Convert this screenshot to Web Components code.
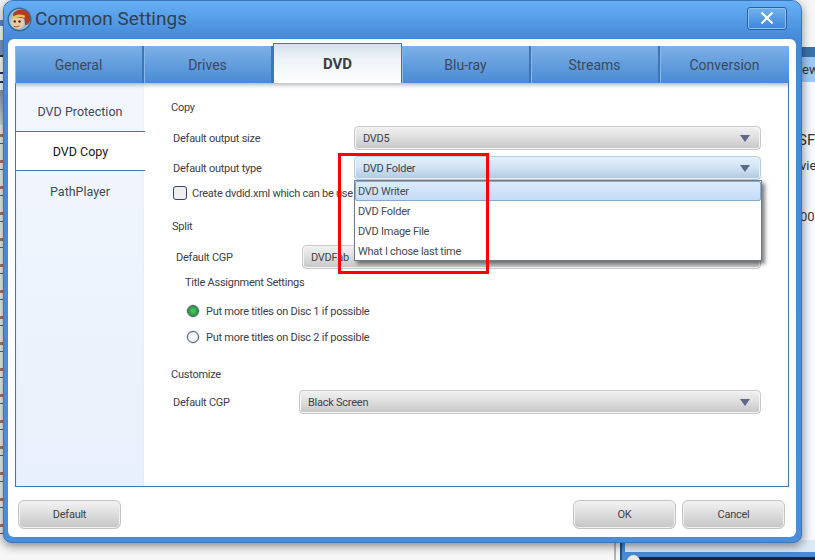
<!DOCTYPE html>
<html><head><meta charset="utf-8"><style>
html,body{margin:0;padding:0;width:815px;height:560px;overflow:hidden;background:#f6f6f6}
body{font:11px Roboto,"Liberation Sans",Arial,sans-serif;color:#3c4048;letter-spacing:-.25px}
</style></head><body>
<template id="t-select"><style>
:host{display:flex;flex:1;height:24px;box-sizing:border-box;align-items:center;justify-content:space-between;padding:0 10px 0 8px;border:1px solid #c9c9c9;border-radius:4px;background:linear-gradient(#f1f1f1,#e2e2e2 40%,#c6c6c6);box-shadow:inset 0 0 0 1px #f4f4f4;color:#3f434b;font-size:11px}
:host([active]){border-color:#b3cde2;background:linear-gradient(#e4f0fb,#d3e4f5 45%,#afc9e2);box-shadow:inset 0 0 0 1px #e6f1fb}
i{width:0;height:0;border-left:5px solid transparent;border-right:5px solid transparent;border-top:7px solid #5c6a84}
</style><span><slot></slot></span><i></i></template>
<template id="t-button"><style>
:host{display:flex;width:103px;height:29px;box-sizing:border-box;align-items:center;justify-content:center;border:1px solid #c4c4c4;border-radius:6px;background:linear-gradient(#f3f3f3,#dedede 45%,#c5c5c5);box-shadow:inset 0 0 0 1px #f0f0f0;color:#3f434b;font-size:11px}
</style><slot></slot></template>
<template id="t-tab"><style>
:host{display:flex;flex:0 0 129px;height:37px;box-sizing:border-box;align-items:center;justify-content:center;font-size:14px;letter-spacing:0;color:#3d4a5c;background:linear-gradient(#7db0e6,#4a8ad5);border-right:2px solid #3c76b6;box-shadow:inset 1px 0 0 #8ab8e8;position:relative}
:host(:last-child){border-right:0}
:host([selected]){background:linear-gradient(#d6e0ea,#eef3f8 40%,#fff);color:#3a3d45;font-weight:700;font-size:15px;height:40px;margin-top:-3px;border:1px solid #3f77b5;border-bottom:0;box-shadow:none;z-index:1}
</style><slot></slot></template>
<template id="t-side"><style>
:host{display:flex;height:40px;box-sizing:border-box;align-items:center;justify-content:center;padding-top:1px;font-size:12.5px;letter-spacing:0;color:#3f4a58}
:host([selected]){background:#fff;color:#15171c;border-top:1px solid #3f77b5;border-bottom:1px solid #3f77b5;margin-right:-1px}
</style><slot></slot></template>
<template id="t-field"><style>
:host{display:flex;align-items:center;height:24px;padding-left:var(--ind,0px)}
span{width:var(--lw,181px);flex:none}
</style><span part="l"><slot name="label"></slot></span><slot></slot></template>
<template id="t-radio"><style>
:host{display:flex;align-items:center;height:26px;padding-left:42px;gap:7px}
i{width:12px;height:12px;box-sizing:border-box;border:1px solid #46566e;border-radius:50%;background:radial-gradient(#fff,#e4e8ee);box-shadow:0 0 0 .5px #b9c3cf}
:host([on]) i{background:radial-gradient(#52c85f,#2a9a3a 70%,#cfe4d2)}
</style><i></i><span><slot></slot></span></template>
<template id="t-check"><style>
:host{display:flex;align-items:center;height:14px;gap:5px;white-space:nowrap}
i{width:14px;height:14px;flex:none;box-sizing:border-box;border:1.5px solid #2f4a6e;border-radius:3px;background:#eeeeee}
</style><i></i><span><slot></slot></span></template>
<template id="t-menu"><style>
:host{position:absolute;left:354px;top:180px;width:408px;height:81px;box-sizing:border-box;background:#fff;border:1px solid #6d7d8e;box-shadow:3px 3px 4px rgba(0,0,0,.5);z-index:3;display:flex;flex-direction:column;color:#454a52;font-size:11px}
div{height:20px;flex:none;display:flex;align-items:center;padding-left:3px}
div:first-of-type{background:linear-gradient(#dcebfb,#c3dcf7);border:1px solid #86a9d0;border-radius:2px;box-sizing:border-box;padding-left:2px}
</style><div>DVD Writer</div><div>DVD Folder</div><div>DVD Image File</div><div>What I chose last time</div></template>
<template id="t-logo"><style>:host{display:block;width:25px;height:25px;margin:-1px 0 0 -1px}svg{display:block}</style>
<svg width="25" height="25" viewBox="0 0 26 26"><circle cx="13" cy="13" r="12.500" fill="#3a6890"/><circle cx="13" cy="13" r="11" fill="#8fc0e0"/><path d="M6 8C8 3 14 2 18 3c5 2 7 6 6 11-1 3-3 5-5 5l-1-7-11-2z" fill="#b23a26"/><path d="M5 11c4-4 9-4 14-2l-1 2.500C13 9.500 9 10.500 6 13z" fill="#eec24a"/><path d="M4.500 13c3-2 10-2 13 0 1 4 0 9-6 10-5 0-8-5-7-10z" fill="#eec9a4"/><circle cx="8" cy="15" r="1.300" fill="#43301f"/><circle cx="13" cy="15" r="1.300" fill="#43301f"/><path d="M7 20c2 1 4 1 6-.5" stroke="#8a4a2e" fill="none"/></svg></template>
<template id="t-backdrop"><style>
:host{position:absolute;inset:0;display:block;overflow:hidden;font-size:14px;color:#333;letter-spacing:0}
div{position:absolute}
.r1{left:790px;top:47px;width:25px;height:10px;background:#3a70a8}
.r2{left:790px;top:57px;width:25px;height:25px;background:#9cc8f2}
.r3{left:790px;top:82px;width:25px;height:462px;background:linear-gradient(90deg,#d8dde8,#fbfbfd)}
.t{white-space:nowrap}
.l1{left:0;top:0;width:3px;height:125px;background:linear-gradient(#f2f4f7 0 20px,#5f8dc4 20px 26px,#fff 26px 40px,#7d9cc4 40px 55px,#333 55px 57px,#fff 57px 72px,#223366 72px 74px,#fff 74px 81px,#223366 81px 83px,#fff 83px 90px,#8d98a8 90px,#d8dce4)}
.l2{left:0;top:125px;width:3px;height:415px;background:repeating-linear-gradient(#f0f2f6 0 9px,#b07866 9px 12px,#f0f2f6 12px 18px,#5a6070 18px 19px,#f0f2f6 19px 26px)}
.b1{left:614px;top:540px;width:2px;height:20px;background:#b4b4b4}
.b6{left:620px;top:540px;width:2px;height:20px;background:#2a4f80}
.b2{left:622px;top:552px;width:193px;height:8px;background:#4a8ad5}
.v{left:622px;top:540px;width:3px;height:12px;background:#4a8ad5}
.b3{left:625px;top:540px;width:190px;height:12px;background:#dce8f5}
.b4{left:636px;top:557px;width:179px;height:3px;background:#10264a}
.b5{left:627px;top:555px;width:13px;height:13px;border-radius:50%;background:#e8e8e8}
</style><div class="l1"></div><div class="l2"></div><div class="r1"></div><div class="r2"></div><div class="r3"></div>
<div class="t" style="left:802px;top:62px;font-size:13px">ew</div><div class="t" style="left:798px;top:131px;font-size:15px">SFC</div><div class="t" style="left:800px;top:158px;font-size:13px">vie</div><div class="t" style="left:800px;top:209px;font-size:13px">00</div>
<div class="b1"></div><div class="b6"></div><div class="v"></div><div class="b3"></div><div class="b2"></div><div class="b4"></div><div class="b5"></div></template>
<template id="t-dialog"><style>
:host{position:absolute;left:3px;top:0;width:799px;height:543px;box-sizing:border-box;border-radius:10px 10px 8px 8px;background:linear-gradient(#66b0f6,#4488d8 38px,#4a8ddb);border:1px solid #3c76b8;box-shadow:0 3px 10px rgba(0,0,0,.45);display:flex;flex-direction:column;padding:0 5px 5px 4px;z-index:1}
header{display:flex;align-items:center;height:38px;flex:none;gap:3px;font-size:19px;letter-spacing:0;color:#33404f}
header span{margin-top:-3px}
.close{margin-left:auto;margin-right:9px;margin-top:-4px;width:40px;height:23px;box-sizing:border-box;border:1px solid #2c5f9c;border-radius:3px;background:linear-gradient(#6fb1f0,#3f85d8);box-shadow:inset 0 0 0 1px #8fc0f0;display:flex;align-items:center;justify-content:center}
main{flex:1;background:#fff;border-radius:6px;padding:7px 7px 0 7px;display:flex;flex-direction:column}
.panel{height:441px;flex:none;box-sizing:border-box;border:1px solid #3f77b5;border-top:0;display:flex;flex-direction:column;background:#fff}
.tabs{display:flex;height:37px;flex:none;align-items:flex-end;margin:0 -1px;border-top:1px solid #3f77b5;box-sizing:border-box}
.body{flex:1;display:flex;box-shadow:inset 0 5px 4px -3px rgba(60,70,90,.4);position:relative}
aside{width:128px;flex:none;background:linear-gradient(#f2f7fe,#e8f0fb);padding-top:8px;box-shadow:inset 0 5px 4px -3px rgba(60,70,90,.4)}
section{flex:1;padding:17px 27px 0 27px;display:flex;flex-direction:column}
h4{margin:0;font:inherit;height:14px;line-height:16px}
.foot{flex:1;display:flex;justify-content:space-between;align-items:flex-start;padding:13px 4px 0 3px}
.right{display:flex;gap:6px}
</style>
<header><x-logo></x-logo><span>Common Settings</span><div class="close"><svg width="16" height="14" viewBox="0 0 16 14"><path d="M2.500 1.500L13.500 12.500M13.500 1.500L2.500 12.500" stroke="#fff" stroke-width="2"/></svg></div></header>
<main><div class="panel">
<div class="tabs"><x-tab>General</x-tab><x-tab>Drives</x-tab><x-tab selected>DVD</x-tab><x-tab>Blu-ray</x-tab><x-tab>Streams</x-tab><x-tab>Conversion</x-tab></div>
<div class="body"><aside><x-side>DVD Protection</x-side><x-side selected>DVD Copy</x-side><x-side>PathPlayer</x-side></aside>
<section>
<h4>Copy</h4>
<x-field style="margin-top:12px;--ind:2px"><span slot="label">Default output size</span><x-select>DVD5</x-select></x-field>
<x-field style="margin-top:6px;--ind:2px"><span slot="label">Default output type</span><x-select active>DVD Folder</x-select></x-field>
<x-check style="margin:6px 0 0 2px">Create dvdid.xml which can be use</x-check>
<h4 style="margin-top:19px;padding-left:1px">Split</h4>
<x-field style="margin-top:12px;--ind:5px;--lw:126px"><span slot="label">Default CGP</span><x-select>DVDFab</x-select></x-field>
<h4 style="margin-top:6px;padding-left:14px">Title Assignment Settings</h4>
<x-radio style="margin-top:9px;padding-left:16px" on>Put more titles on Disc 1 if possible</x-radio>
<x-radio style="padding-left:16px">Put more titles on Disc 2 if possible</x-radio>
<h4 style="margin-top:17px">Customize</h4>
<x-field style="margin-top:9px;--ind:2px;--lw:126px"><span slot="label">Default CGP</span><x-select>Black Screen</x-select></x-field>
</section></div></div>
<div class="foot"><x-button>Default</x-button><div class="right"><x-button>OK</x-button><x-button>Cancel</x-button></div></div>
</main></template>
<template id="t-mark"><style>:host{position:absolute;left:338px;top:153px;width:151px;height:121px;box-sizing:border-box;border:3px solid #f00;z-index:4;pointer-events:none}</style></template>
<x-backdrop></x-backdrop><x-dialog></x-dialog><x-menu></x-menu><x-mark></x-mark>
<script>
for(const n of ['select','button','tab','side','field','radio','check','menu','logo','backdrop','dialog','mark']){
 customElements.define('x-'+n,class extends HTMLElement{constructor(){super();this.attachShadow({mode:'open'}).appendChild(document.getElementById('t-'+n).content.cloneNode(true))}});
}
</script></body></html>
